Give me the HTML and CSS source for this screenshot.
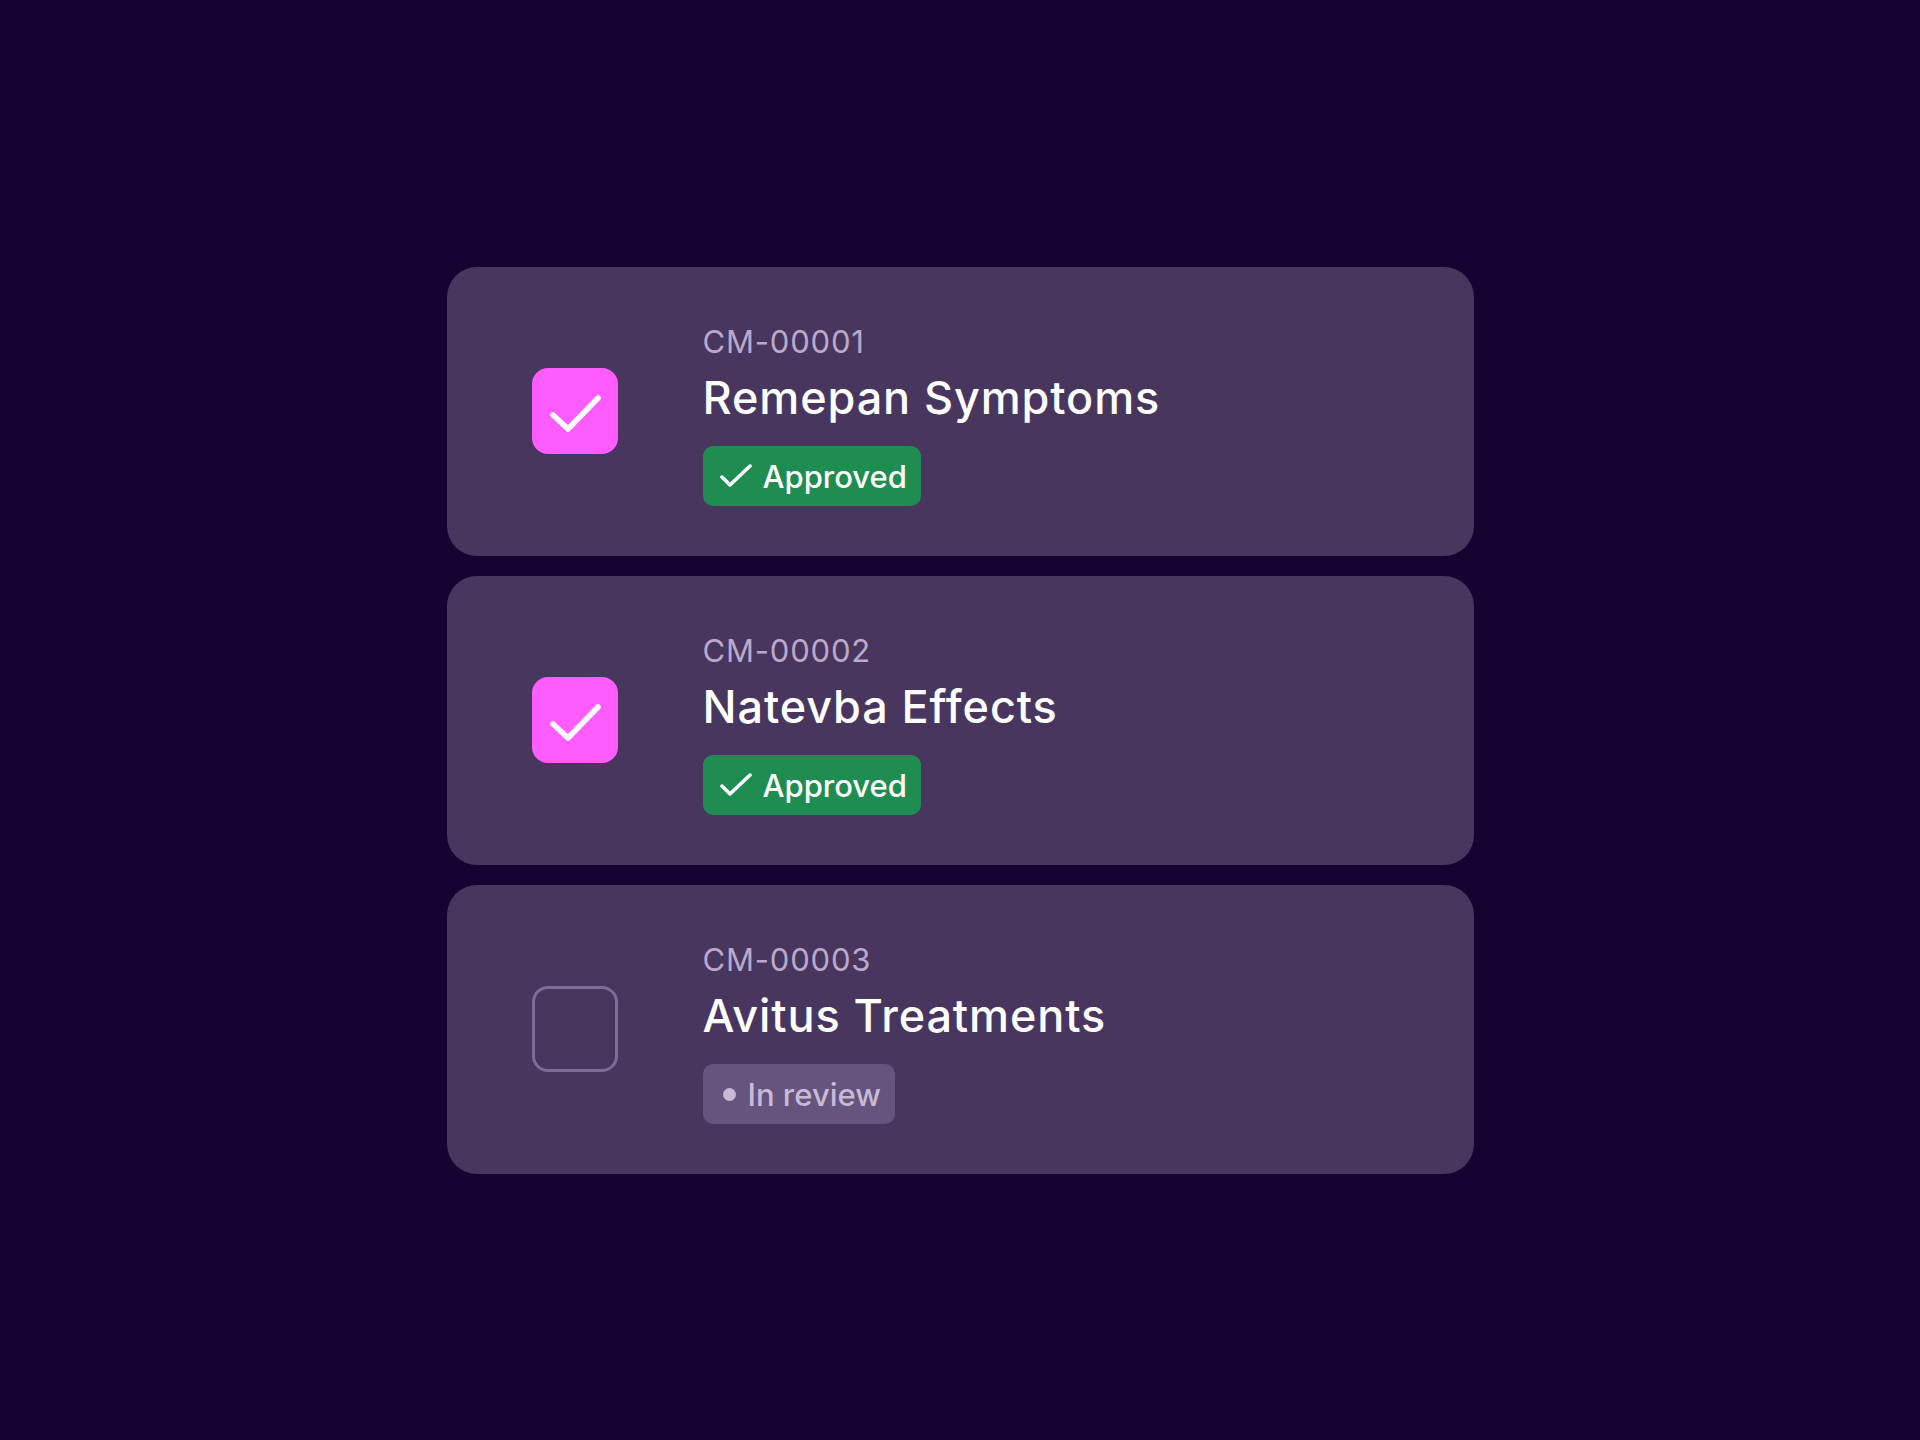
FILE: index.html
```html
<!DOCTYPE html>
<html lang="en">
<head>
<meta charset="utf-8">
<title>Claims</title>
<link rel="stylesheet" href="styles.css">
</head>
<body>
<main class="list">
  <section class="card">
    <div class="check checked">
      <svg viewBox="0 0 86 86" width="86" height="86"><polyline points="21,47 36,61 66,30" fill="none" stroke="#ffffff" stroke-width="5.5" stroke-linecap="round" stroke-linejoin="round"/></svg>
    </div>
    <div class="info">
      <div class="code">CM-00001</div>
      <div class="title">Remepan Symptoms</div>
      <div class="badge approved">
        <svg viewBox="0 0 34 24" width="34" height="24"><polyline points="3,13 11,21 31,2" fill="none" stroke="#ffffff" stroke-width="3.5" stroke-linecap="round" stroke-linejoin="round"/></svg>
        <span>Approved</span>
      </div>
    </div>
  </section>
  <section class="card">
    <div class="check checked">
      <svg viewBox="0 0 86 86" width="86" height="86"><polyline points="21,47 36,61 66,30" fill="none" stroke="#ffffff" stroke-width="5.5" stroke-linecap="round" stroke-linejoin="round"/></svg>
    </div>
    <div class="info">
      <div class="code">CM-00002</div>
      <div class="title">Natevba Effects</div>
      <div class="badge approved">
        <svg viewBox="0 0 34 24" width="34" height="24"><polyline points="3,13 11,21 31,2" fill="none" stroke="#ffffff" stroke-width="3.5" stroke-linecap="round" stroke-linejoin="round"/></svg>
        <span>Approved</span>
      </div>
    </div>
  </section>
  <section class="card">
    <div class="check"></div>
    <div class="info">
      <div class="code">CM-00003</div>
      <div class="title">Avitus Treatments</div>
      <div class="badge review">
        <span class="dot"></span>
        <span>In review</span>
      </div>
    </div>
  </section>
</main>
</body>
</html>
```
FILE: styles.css
```css
html, body {
  margin: 0;
  padding: 0;
}
body {
  background: #150431;
  width: 1920px;
  height: 1440px;
  font-family: "Inter", "Liberation Sans", sans-serif;
  display: flex;
  align-items: center;
  justify-content: center;
}
.list {
  width: 1027px;
  display: flex;
  flex-direction: column;
  gap: 20px;
}
.card {
  height: 289px;
  box-sizing: border-box;
  background: #48365f;
  border-radius: 30px;
  display: flex;
  align-items: center;
  padding-left: 85px;
  gap: 85px;
}
.check {
  width: 86px;
  height: 86px;
  flex: none;
  box-sizing: border-box;
  border-radius: 16px;
  border: 3px solid #7e6c96;
}
.check.checked {
  background: #ff5cff;
  border: none;
}
.check svg {
  display: block;
}
.info {
  display: flex;
  flex-direction: column;
  align-items: flex-start;
  margin-top: 8px;
}
.code {
  font-size: 31px;
  line-height: 36px;
  letter-spacing: 0.8px;
  color: #bba9cb;
}
.title {
  font-size: 45px;
  line-height: 52px;
  font-weight: 500;
  letter-spacing: 0.9px;
  color: #ffffff;
  margin-top: 12px;
}
.badge {
  margin-top: 22px;
  height: 60px;
  box-sizing: border-box;
  border-radius: 10px;
  display: flex;
  align-items: center;
  font-size: 31px;
  font-weight: 500;
}
.badge.approved {
  background: #1f8c52;
  color: #ffffff;
  padding: 0 14px 0 16px;
  gap: 10px;
}
.badge.review {
  background: #65547d;
  color: #c9b9d9;
  padding: 0 14px 0 20px;
  gap: 12px;
}
.dot {
  width: 13px;
  height: 13px;
  border-radius: 50%;
  background: #c9b9d9;
}
```
